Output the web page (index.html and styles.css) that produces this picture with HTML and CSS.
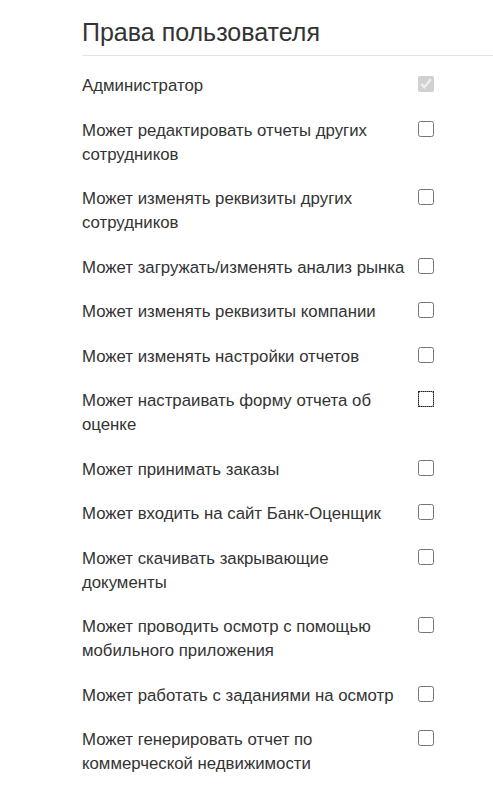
FILE: index.html
```html
<!DOCTYPE html>
<html>
  <head>
    <meta charset="utf-8">
    <title>Права пользователя</title>
    <link rel="stylesheet" href="styles.css">
  </head>
  <body>
    <div class="page">
      <h3 class="title">Права пользователя</h3>
      <ul class="rights">
        <li class="right">
          <span class="label">Администратор</span>
          <input type="checkbox" checked disabled>
        </li>
        <li class="right">
          <span class="label">Может редактировать отчеты других сотрудников</span>
          <input type="checkbox">
        </li>
        <li class="right">
          <span class="label">Может изменять реквизиты других сотрудников</span>
          <input type="checkbox">
        </li>
        <li class="right">
          <span class="label">Может загружать/изменять анализ рынка</span>
          <input type="checkbox">
        </li>
        <li class="right">
          <span class="label">Может изменять реквизиты компании</span>
          <input type="checkbox">
        </li>
        <li class="right">
          <span class="label">Может изменять настройки отчетов</span>
          <input type="checkbox">
        </li>
        <li class="right">
          <span class="label">Может настраивать форму отчета об оценке</span>
          <input type="checkbox" class="focused">
        </li>
        <li class="right">
          <span class="label">Может принимать заказы</span>
          <input type="checkbox">
        </li>
        <li class="right">
          <span class="label">Может входить на сайт Банк-Оценщик</span>
          <input type="checkbox">
        </li>
        <li class="right">
          <span class="label">Может скачивать закрывающие документы</span>
          <input type="checkbox">
        </li>
        <li class="right">
          <span class="label">Может проводить осмотр с помощью мобильного приложения</span>
          <input type="checkbox">
        </li>
        <li class="right">
          <span class="label">Может работать с заданиями на осмотр</span>
          <input type="checkbox">
        </li>
        <li class="right">
          <span class="label">Может генерировать отчет по коммерческой недвижимости</span>
          <input type="checkbox">
        </li>
      </ul>
    </div>
  </body>
</html>
```

FILE: styles.css
```css
body {
  margin: 0;
  background-color: #fff;
  font-family: "Liberation Sans", Arial, sans-serif;
  color: #333;
}

.page {
  padding: 18px 0 0 82px;
}

.title {
  margin: 0;
  padding-bottom: 8px;
  font-size: 25px;
  line-height: 29px;
  font-weight: normal;
  border-bottom: 1px solid #e5e5e5;
}

.rights {
  list-style: none;
  margin: 18px 0 0;
  padding: 0;
  display: flex;
  flex-direction: column;
  gap: 20.5px;
}

.right {
  display: flex;
  align-items: flex-start;
  font-size: 16.8px;
  line-height: 24px;
}

.label {
  width: 330px;
  flex-shrink: 0;
}

.right input {
  width: 16px;
  height: 16px;
  margin: 2px 0 0 6px;
}

.right input.focused {
  outline: 1px dotted #222;
  outline-offset: -1px;
}
```
